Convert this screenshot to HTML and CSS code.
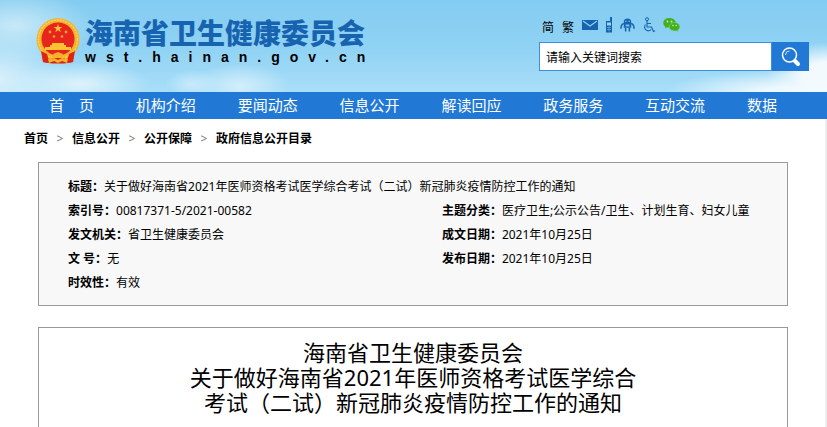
FILE: index.html
```html
<!DOCTYPE html>
<html lang="zh-CN">
<head>
<meta charset="utf-8">
<title>海南省卫生健康委员会</title>
<link rel="stylesheet" href="styles.css">
</head>
<body>
<header class="header">
  <a class="brand" href="#">
    <svg class="emblem" viewBox="0 0 44 46" aria-hidden="true">
      <path d="M6 31h32l-1 13-9 1.500H16L7 44z" fill="#d8200f"/>
      <circle cx="22" cy="21.500" r="21.500" fill="#f3b52e"/>
      <circle cx="22" cy="21.500" r="19.500" fill="none" stroke="#fbd058" stroke-width="1.500" stroke-dasharray="2 1"/>
      <circle cx="22" cy="21" r="16.500" fill="#e8251c"/>
      <path d="M22 6l1.100 3.100h3.200l-2.600 2 1 3.100-2.700-1.900-2.700 1.900 1-3.100-2.600-2h3.200z" fill="#fbc333"/>
      <g fill="#f8a52c"><circle cx="14" cy="14" r="1.400"/><circle cx="30" cy="14" r="1.400"/><circle cx="18" cy="18.500" r="1.300"/><circle cx="26" cy="18.500" r="1.300"/></g>
      <path d="M16 25h12v2h2v2h5v3H9v-3h5v-2h2z" fill="#fbc333"/>
      <path d="M5 33l6 3 2 7-1 2-5-1zM39 33l-6 3-2 7 1 2 5-1z" fill="#e0240f"/>
      <path d="M15 40h14l-2 5H17z" fill="#e0240f"/>
      <path d="M17 36l5-2 5 2-2 3h-6zM12 41l6-1 4 2 4-2 6 1-1 4-5-2-4 2-4-2-5 2z" fill="#f6b129"/>
    </svg>
    <span class="brand-text">
      <span class="brand-name">海南省卫生健康委员会</span>
      <span class="brand-url">wst.hainan.gov.cn</span>
    </span>
  </a>
  <div class="tools">
    <div class="links">
      <a href="#">简</a>
      <a href="#">繁</a>
      <div class="icons">
      <a href="#" aria-label="邮箱"><svg width="16" height="16" viewBox="0 0 16 16"><path d="M0 3h16v10H0z" fill="#1763b0"/><path d="M1 4l7 5 7-5" fill="none" stroke="#8fd0f2" stroke-width="1.200"/></svg></a>
      <a href="#" aria-label="手机"><svg width="8" height="16" viewBox="0 0 8 16"><path d="M5 0h2v4h0v11.500H1V4h4z" fill="#1763b0"/><path d="M2 5.500h4v3H2z" fill="#9bd6f4"/><path d="M2 10.500h4M2 12.500h4M4 9.500v5" stroke="#6cb0de" stroke-width=".7"/></svg></a>
      <a href="#" aria-label="智能问答"><svg width="15" height="16" viewBox="0 0 16 16"><path d="M4 5a4 4 0 0 1 8 0v6H4z" fill="#1763b0"/><path d="M5.500 4h1.500M9 4h1.500" stroke="#9bd6f4"/><path d="M6 7.500h4v2H6z" fill="#7fc4ec"/><path d="M4 6.500C2 7 1 9 1 12M12 6.500c2 .5 3 2.500 3 5.500M6 11v4M10 11v4" fill="none" stroke="#1763b0" stroke-width="1.600"/></svg></a>
      <a href="#" aria-label="无障碍"><svg width="14" height="16" viewBox="0 0 14 16"><circle cx="5" cy="2.200" r="1.500" fill="none" stroke="#1763b0"/><path d="M5 4v6h4.500l2 4.500 1.500-.7M5 6.500h4M3.500 7.500a3.800 3.800 0 1 0 5.800 5" fill="none" stroke="#1763b0" stroke-width="1.100"/></svg></a>
      <a href="#" aria-label="微信"><svg width="17" height="16" viewBox="0 0 17 16"><path d="M6.500 1C3 1 .3 3.100.3 5.900c0 1.600.8 2.900 2.100 3.800L2 11.500l2.200-1.200c.7.200 1.500.3 2.300.3 3.500 0 6.200-2 6.200-4.700S10 1 6.500 1z" fill="#43b01c"/><path d="M11.500 5.500c-3 0-5.200 1.800-5.200 4.200s2.200 4.200 5.200 4.200c.6 0 1.200-.1 1.800-.2l1.900 1-.5-1.600c1.300-.8 2.100-2 2.100-3.400 0-2.400-2.300-4.200-5.300-4.200z" fill="#43b01c" stroke="#8fd38f" stroke-width=".5"/><g fill="#c9efc0"><circle cx="4.500" cy="4.500" r=".9"/><circle cx="8.500" cy="4.500" r=".9"/><circle cx="10" cy="8.500" r=".8"/><circle cx="13.300" cy="8.500" r=".8"/></g></svg></a>
      </div>
    </div>
    <form class="search">
      <input type="text" aria-label="搜索" value="请输入关键词搜索">
      <button type="button" aria-label="搜索"><svg width="20" height="20" viewBox="0 0 20 20"><circle cx="8.500" cy="8" r="7" fill="none" stroke="#fff" stroke-width="1.500"/><path d="M4.500 8a4 4 0 0 1 4-4" fill="none" stroke="#cfe3f8"/><path d="M14 14l3 3" stroke="#fff" stroke-width="4" stroke-linecap="round"/></svg></button>
    </form>
  </div>
</header>
<nav class="nav">
  <a href="#">首　页</a>
  <a href="#">机构介绍</a>
  <a href="#">要闻动态</a>
  <a href="#">信息公开</a>
  <a href="#">解读回应</a>
  <a href="#">政务服务</a>
  <a href="#">互动交流</a>
  <a href="#">数据</a>
</nav>
<main class="main">
  <div class="crumbs">
    <a href="#">首页</a><span>&gt;</span><a href="#">信息公开</a><span>&gt;</span><a href="#">公开保障</a><span>&gt;</span><a href="#">政府信息公开目录</a>
  </div>
  <dl class="meta">
    <div class="wide"><dt>标题：</dt><dd>关于做好海南省2021年医师资格考试医学综合考试（二试）新冠肺炎疫情防控工作的通知</dd></div>
    <div><dt>索引号：</dt><dd>00817371-5/2021-00582</dd></div>
    <div><dt>主题分类：</dt><dd>医疗卫生;公示公告/卫生、计划生育、妇女儿童</dd></div>
    <div><dt>发文机关：</dt><dd>省卫生健康委员会</dd></div>
    <div><dt>成文日期：</dt><dd>2021年10月25日</dd></div>
    <div><dt>文 号：</dt><dd>无</dd></div>
    <div><dt>发布日期：</dt><dd>2021年10月25日</dd></div>
    <div><dt>时效性：</dt><dd>有效</dd></div>
  </dl>
  <article class="article">
    <h1>海南省卫生健康委员会<br>关于做好海南省2021年医师资格考试医学综合<br>考试（二试）新冠肺炎疫情防控工作的通知</h1>
  </article>
</main>
</body>
</html>
```
FILE: styles.css
```css
* { box-sizing: border-box; }
body {
  margin: 0;
  min-height: 100vh;
  display: flex;
  flex-direction: column;
  font: 12px/24px "Noto Sans", "Noto Sans CJK SC", sans-serif;
  color: #000;
  background: #fff;
}
a { color: inherit; text-decoration: none; }
svg { display: block; }

.header {
  display: flex;
  justify-content: space-between;
  align-items: flex-start;
  height: 92px;
  padding: 16px 18px 0 36px;
  background:
    radial-gradient(ellipse 60px 34px at 100% 76px, #f2fafe 40%, transparent),
    radial-gradient(ellipse 120px 22px at 95% 92px, #ecf8fe 20%, transparent),
    radial-gradient(ellipse 50px 22px at 240px 86px, #d3eefb, transparent),
    radial-gradient(ellipse 26px 14px at 192px 84px, #c8eafa, transparent),
    radial-gradient(ellipse 70px 22px at 80px 84px, #def3fc, transparent),
    radial-gradient(ellipse 80px 36px at 15px 26px, #c8e9f8, transparent),
    radial-gradient(ellipse 70px 50px at 0 80px, #d8f0fb, transparent),
    linear-gradient(#83ccf1, #8fd2f4 50%, #a9def8);
}
.brand { display: flex; gap: 5px; }
.emblem { width: 44px; height: 50px; }
.brand-text { display: flex; flex-direction: column; }
.brand-name { font-size: 28px; line-height: 34px; font-weight: 900; color: #1763b0; }
.brand-url { font: bold 14px/14px "Liberation Sans", sans-serif; letter-spacing: 10px; }

.tools { width: 270px; }
.links { display: flex; gap: 8px; height: 20px; padding-left: 3px; }
.icons { display: flex; gap: 7px; padding-top: 1px; }
.search { display: flex; height: 29px; margin-top: 6px; }
.search input {
  flex: 1;
  min-width: 0;
  padding: 2px 6px 0;
  border: 1px solid #3d8de0;
  border-radius: 0;
  font: inherit;
  background: #fff;
}
.search button {
  display: grid;
  place-items: center;
  width: 37px;
  padding: 0;
  border: 0;
  background: #2179d5;
}

.nav {
  display: flex;
  justify-content: space-between;
  padding: 0 50px 0 49px;
  background: #2179d5;
  color: #fff;
  font-size: 15px;
  line-height: 27px;
}

.main {
  flex: 1;
  display: flex;
  flex-direction: column;
  padding: 8px 37px 0 38px;
  border-right: 2px solid #eee;
}
.crumbs { display: flex; margin-left: -14px; font-weight: bold; }
.crumbs span { width: 24px; text-align: center; font-weight: normal; color: #777; }
.meta {
  display: grid;
  grid-template-columns: 52% 48%;
  margin: 11px 0 21px;
  padding: 12px 0 10px 29px;
  border: 1px solid #999;
  background: #f8f8f8;
}
.meta div { display: flex; }
.meta .wide { grid-column: 1 / -1; }
.meta dt { font-weight: bold; }
.meta dd { margin: 0; }
.article {
  flex: 1;
  padding: 12px 0 0;
  border: 1px solid #999;
  border-bottom: 0;
  text-align: center;
}
.article h1 { margin: 0; font-size: 22px; line-height: 25px; font-weight: normal; }
```
